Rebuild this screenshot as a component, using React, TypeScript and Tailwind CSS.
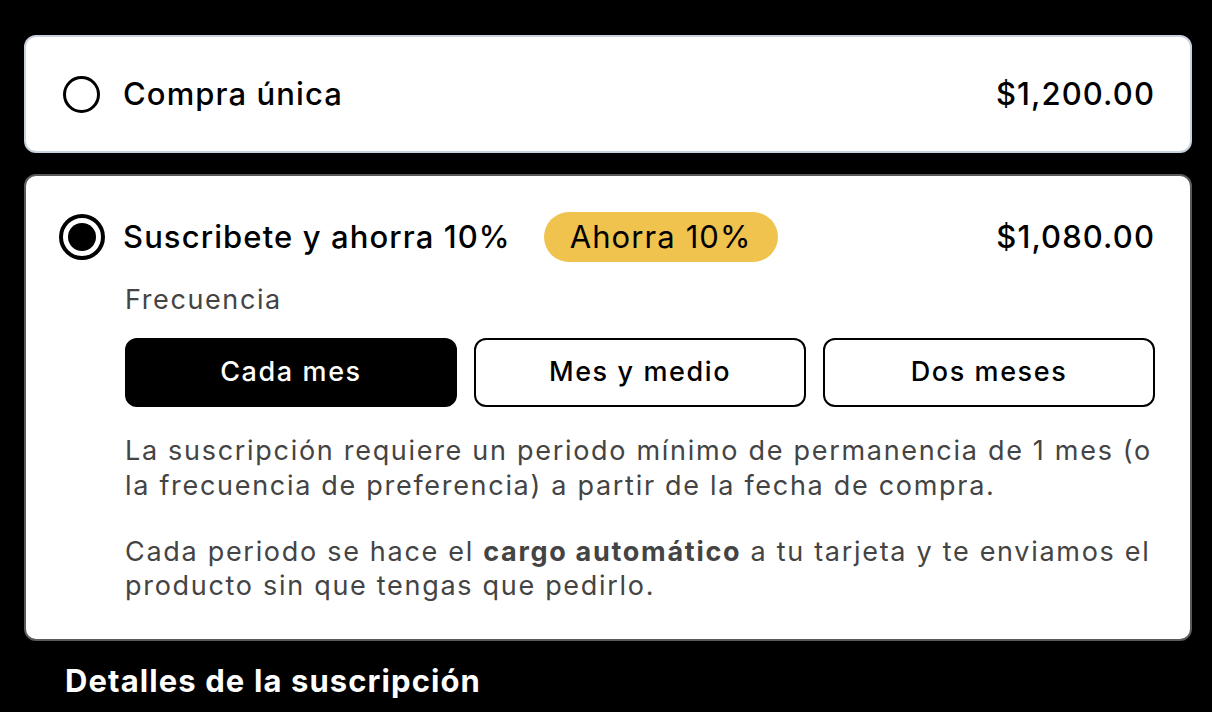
import React from "react";

export default function App() {
  const freqs = ["Cada mes", "Mes y medio", "Dos meses"];
  return (
    <div
      className="w-[1212px] h-[712px] bg-black overflow-hidden pt-[35px] pl-[24px] pr-[20px]"
      style={{ fontFamily: "Inter, 'Noto Sans', sans-serif" }}
    >
      {/* Card 1 */}
      <div className="h-[118px] bg-white rounded-[12px] border-2 border-[#c9d1dc] flex items-center pl-[37px] pr-[35px]">
        <div className="w-[37px] h-[37px] rounded-full border-[3px] border-black shrink-0" />
        <div className="ml-[23px] text-[31px] font-medium text-black tracking-[1.1px]">Compra única</div>
        <div className="ml-auto text-[31px] font-medium text-black tracking-[1.1px]">$1,200.00</div>
      </div>

      {/* Card 2 */}
      <div className="mt-[21px] h-[467px] bg-white rounded-[12px] border-2 border-[#5a5a5a] pl-[33px] pr-[35px] pt-[36px]">
        <div className="flex items-center h-[50px]">
          <div className="w-[46px] h-[46px] rounded-full border-[4px] border-black shrink-0 flex items-center justify-center">
            <div className="w-[28px] h-[28px] rounded-full bg-black" />
          </div>
          <div className="ml-[18px] text-[31px] font-medium text-black tracking-[1.1px]">Suscribete y ahorra 10%</div>
          <div className="ml-[33px] h-[50px] px-[26px] rounded-full bg-[#f0c24e] flex items-center text-[31px] text-black tracking-[1.1px]">
            Ahorra 10%
          </div>
          <div className="ml-auto text-[31px] font-medium text-black tracking-[1.1px]">$1,080.00</div>
        </div>
        <div className="pl-[66px]">
          <div className="mt-[20px] text-[27px] text-[#444] tracking-[1.6px] leading-[36px]">Frecuencia</div>
          <div className="mt-[20px] grid grid-cols-3 gap-[17px]">
            {freqs.map((f, i) => (
              <div
                key={f}
                className={
                  i === 0
                    ? "h-[69px] rounded-[12px] bg-black text-white border-2 border-black flex items-center justify-center text-[27px] font-medium tracking-[1.6px]"
                    : "h-[69px] rounded-[12px] bg-white text-black border-2 border-black flex items-center justify-center text-[27px] font-medium tracking-[1.6px]"
                }
              >
                {f}
              </div>
            ))}
          </div>
          <p className="mt-[26px] text-[27px] leading-[35px] text-[#444] tracking-[1.7px]">
            La suscripción requiere un periodo mínimo de permanencia de 1 mes (o la frecuencia de preferencia) a partir de la fecha de compra.
          </p>
          <p className="mt-[32px] text-[27px] leading-[34px] text-[#444] tracking-[1.7px]">
            Cada periodo se hace el <span className="font-bold">cargo automático</span> a tu tarjeta y te enviamos el producto sin que tengas que pedirlo.
          </p>
        </div>
      </div>

      <div className="mt-[22px] pl-[41px] text-[31px] font-bold text-white tracking-[1.1px] leading-[36px]">
        Detalles de la suscripción
      </div>
    </div>
  );
}
